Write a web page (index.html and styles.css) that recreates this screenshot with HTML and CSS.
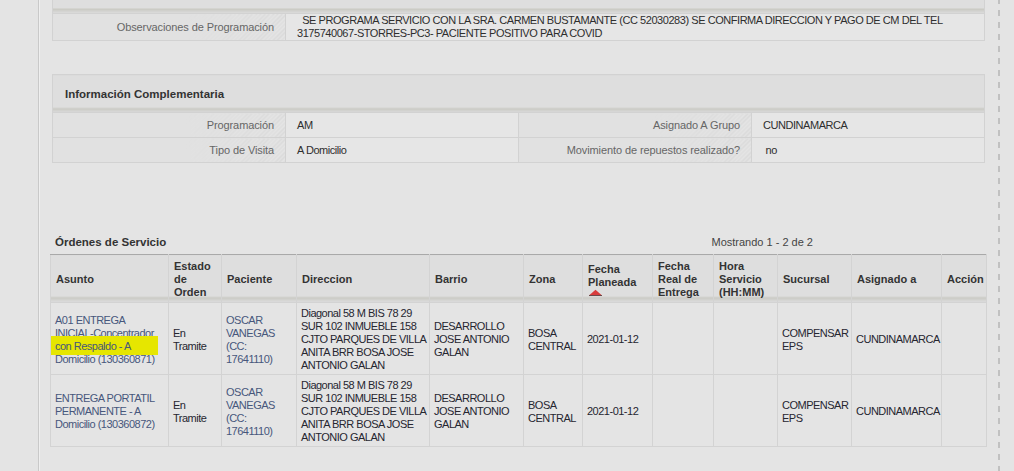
FILE: index.html
```html
<!DOCTYPE html>
<html lang="es">
<head>
    <meta charset="UTF-8">
    <meta name="viewport" content="width=device-width, initial-scale=1.0">
    <title>Detalle de Servicio</title>
    <link rel="stylesheet" href="styles.css">
</head>
<body>
<div class="content">

    <table class="panel panel-cut">
        <colgroup><col class="col-lbl"><col></colgroup>
        <tr><td class="panel-strip" colspan="2"></td></tr>
        <tr>
            <td class="lbl">Observaciones de Programación</td>
            <td class="val obs">&nbsp;&nbsp;SE PROGRAMA SERVICIO CON LA SRA. CARMEN BUSTAMANTE (CC 52030283) SE CONFIRMA DIRECCION Y PAGO DE CM DEL TEL<br>3175740067-STORRES-PC3- PACIENTE POSITIVO PARA COVID</td>
        </tr>
    </table>

    <table class="panel info">
        <tr><th class="panel-title" colspan="4">Información Complementaria</th></tr>
        <tr>
            <td class="lbl">Programación</td>
            <td class="val">AM</td>
            <td class="lbl">Asignado A Grupo</td>
            <td class="val">CUNDINAMARCA</td>
        </tr>
        <tr>
            <td class="lbl">Tipo de Visita</td>
            <td class="val">A Domicilio</td>
            <td class="lbl">Movimiento de repuestos realizado?</td>
            <td class="val">&nbsp;no</td>
        </tr>
    </table>

    <div class="orders">
        <div class="orders-bar">
            <span class="orders-title">Órdenes de Servicio</span>
            <span class="orders-count">Mostrando 1 - 2 de 2</span>
        </div>
        <table class="grid">
            <colgroup>
                <col style="width:118px"><col style="width:53px"><col style="width:75px"><col style="width:133px">
                <col style="width:94px"><col style="width:59px"><col style="width:70px"><col style="width:61px">
                <col style="width:64px"><col style="width:74px"><col style="width:90px"><col style="width:45px">
            </colgroup>
            <tr>
                <th>Asunto</th>
                <th>Estado<br>de<br>Orden</th>
                <th>Paciente</th>
                <th>Direccion</th>
                <th>Barrio</th>
                <th>Zona</th>
                <th>Fecha<br>Planeada<svg class="sort" width="13" height="7" viewBox="0 0 13 7"><polygon points="0.5,6 6.5,0.8 12.5,6" fill="#d83c3c"/><line x1="0" y1="6.5" x2="13" y2="6.5" stroke="#6b4a4a" stroke-width="1"/></svg></th>
                <th>Fecha<br>Real de<br>Entrega</th>
                <th>Hora<br>Servicio<br>(HH:MM)</th>
                <th>Sucursal</th>
                <th>Asignado a</th>
                <th>Acción</th>
            </tr>
            <tr>
                <td><a class="link" href="#">A01 ENTREGA<br>INICIAL-Concentrador<br><span class="mark">con Respaldo - A</span><br>Domicilio (130360871)</a></td>
                <td>En<br>Tramite</td>
                <td><a class="link" href="#">OSCAR<br>VANEGAS<br>(CC:<br>17641110)</a></td>
                <td>Diagonal 58 M BIS 78 29<br>SUR 102 INMUEBLE 158<br>CJTO PARQUES DE VILLA<br>ANITA BRR BOSA JOSE<br>ANTONIO GALAN</td>
                <td>DESARROLLO<br>JOSE ANTONIO<br>GALAN</td>
                <td>BOSA<br>CENTRAL</td>
                <td>2021-01-12</td>
                <td></td>
                <td></td>
                <td>COMPENSAR<br>EPS</td>
                <td>CUNDINAMARCA</td>
                <td></td>
            </tr>
            <tr>
                <td><a class="link" href="#">ENTREGA PORTATIL<br>PERMANENTE - A<br>Domicilio (130360872)</a></td>
                <td>En<br>Tramite</td>
                <td><a class="link" href="#">OSCAR<br>VANEGAS<br>(CC:<br>17641110)</a></td>
                <td>Diagonal 58 M BIS 78 29<br>SUR 102 INMUEBLE 158<br>CJTO PARQUES DE VILLA<br>ANITA BRR BOSA JOSE<br>ANTONIO GALAN</td>
                <td>DESARROLLO<br>JOSE ANTONIO<br>GALAN</td>
                <td>BOSA<br>CENTRAL</td>
                <td>2021-01-12</td>
                <td></td>
                <td></td>
                <td>COMPENSAR<br>EPS</td>
                <td>CUNDINAMARCA</td>
                <td></td>
            </tr>
        </table>
    </div>

</div>
</body>
</html>
```

FILE: styles.css
```css
body { margin: 0; background: #e4e4e4; font-family: Arial, "Liberation Sans", sans-serif; font-size: 11px; color: #333; }

/* main column: solid rule on the left, dashed rule on the right */
.content {
    width: 962px; min-height: 100vh; box-sizing: border-box;
    margin-left: 38px; padding: 0 15px 1px 13px;
    border-left: 1px solid #c9c9c9; box-shadow: inset 1px 0 #efefef;
    background: linear-gradient(#c1c1c1 50%, transparent 50%) right 0 top 10px / 2px 12px repeat-y;
}

/* form panels */
.panel { width: 100%; border-collapse: collapse; table-layout: fixed; border: 1px solid #cecece; }
.panel td, .panel th { border: 1px solid #d2d2d2; }
.panel-cut { border-top: 0; }
.col-lbl { width: 233px; }
.panel-strip { height: 13px; padding: 0; border-top: 0 !important; background: linear-gradient(#dedede 8px, #c9c9c2 9px, #dbdbdb 13px); }
.panel-title {
    height: 37px; padding: 0 12px; text-align: left; font-size: 11.5px; color: #333;
    background: linear-gradient(#dedede calc(100% - 5px), #c9c9c2 calc(100% - 4px), #dbdbdb);
}
.lbl {
    text-align: right; color: #666; padding: 5px 11px 5px 4px; line-height: 14px; letter-spacing: -0.1px;
    background:
        linear-gradient(to right, #e1e1e1 55%, rgba(225,225,225,0)),
        repeating-linear-gradient(135deg, #e4e4e4 0 2px, #d9d9d9 2px 3px);
}
.val { color: #2e2e2e; padding: 5px 11px; line-height: 14px; background: #e6e6e6; letter-spacing: -0.45px; }
.obs { padding: 0 11px; line-height: 13px; white-space: nowrap; }

.info { margin-top: 33px; }

/* orders list */
.orders { margin: 73px -1px 0 -2px; }
.orders-bar { display: flex; justify-content: space-between; padding: 0 173px 0 5px; line-height: 13px; margin-bottom: 5px; }
.orders-title { font-weight: bold; font-size: 11.5px; }
.orders-count { color: #444; }

.grid { width: 936px; border-collapse: collapse; table-layout: fixed; }
.grid th, .grid td { border: 1px solid #d3d3d3; white-space: nowrap; text-align: left; line-height: 13px; }
.grid th {
    border-top: 1px solid #a9a9a9; padding: 5px 5px 3px; vertical-align: middle; color: #333;
    background: linear-gradient(#dedede calc(100% - 6px), #c8c8c2 calc(100% - 5px), #dadada calc(100% - 1px));
}
.grid td { padding: 4px 4px 2px; vertical-align: middle; color: #262630; letter-spacing: -0.5px; }
.sort { display: block; margin-left: 1px; }

.link { color: #47577c; text-decoration: none; }
.mark { background: #e6e600; padding: 4px 27px 3px 4px; margin: 0 -27px 0 -4px; }
```
